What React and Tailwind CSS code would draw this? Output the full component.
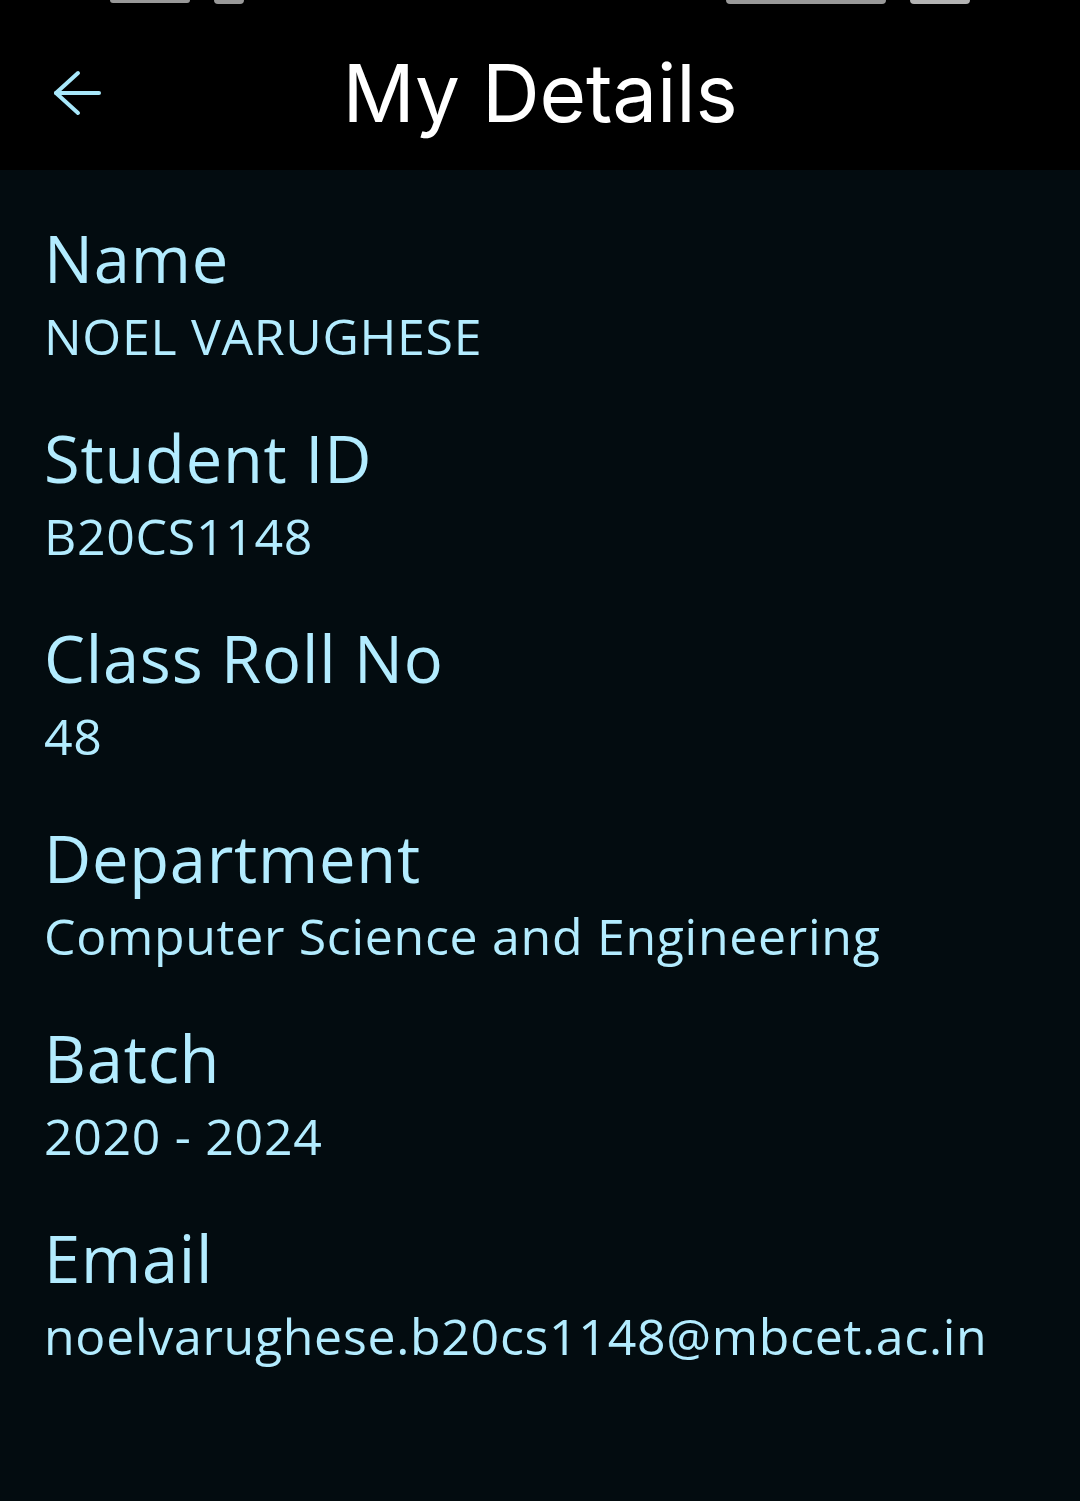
const fields = [
  { label: "Name", value: "NOEL VARUGHESE" },
  { label: "Student ID", value: "B20CS1148" },
  { label: "Class Roll No", value: "48" },
  { label: "Department", value: "Computer Science and Engineering" },
  { label: "Batch", value: "2020 - 2024" },
  { label: "Email", value: "noelvarughese.b20cs1148@mbcet.ac.in" },
];

function BackArrow() {
  return (
    <svg width="50" height="46" viewBox="0 0 50 46" fill="none" stroke="#a8e8fb" strokeWidth="4" strokeLinecap="round" strokeLinejoin="round">
      <path d="M3 23 H46" />
      <path d="M25 3 L3 23 L25 43" />
    </svg>
  );
}

export default function App() {
  return (
    <div className="flex h-[1501px] w-[1080px] flex-col overflow-hidden bg-[#030c10]">
      <header className="relative flex h-[170px] shrink-0 items-center justify-center bg-black">
        <div className="absolute left-0 right-0 top-0 flex h-[5px] justify-between px-[110px]">
          <div className="flex gap-6">
            <div className="h-[3px] w-[80px] rounded-b bg-white/60" />
            <div className="h-[4px] w-[30px] rounded-b bg-white/60" />
          </div>
          <div className="flex gap-6">
            <div className="h-[4px] w-[160px] rounded-b bg-white/60" />
            <div className="h-[4px] w-[60px] rounded-b bg-white/70" />
          </div>
        </div>
        <button className="absolute left-[53px] top-[70px]" aria-label="back">
          <BackArrow />
        </button>
        <h1 className="pt-[16px] font-['Inter',sans-serif] text-[80px] font-normal leading-none tracking-[-0.2px] text-white">
          My Details
        </h1>
      </header>

      <main className="flex flex-col gap-[50px] px-[44px] pt-[52px] font-['Open_Sans','Noto_Sans',sans-serif] text-[#b3ecff]">
        {fields.map((f) => (
          <div key={f.label} className="flex flex-col">
            <div className="text-[65px] leading-[72px] tracking-[0.8px]">{f.label}</div>
            <div className="mt-[6px] text-[50px] leading-[72px] tracking-[0.7px]">{f.value}</div>
          </div>
        ))}
      </main>
    </div>
  );
}
